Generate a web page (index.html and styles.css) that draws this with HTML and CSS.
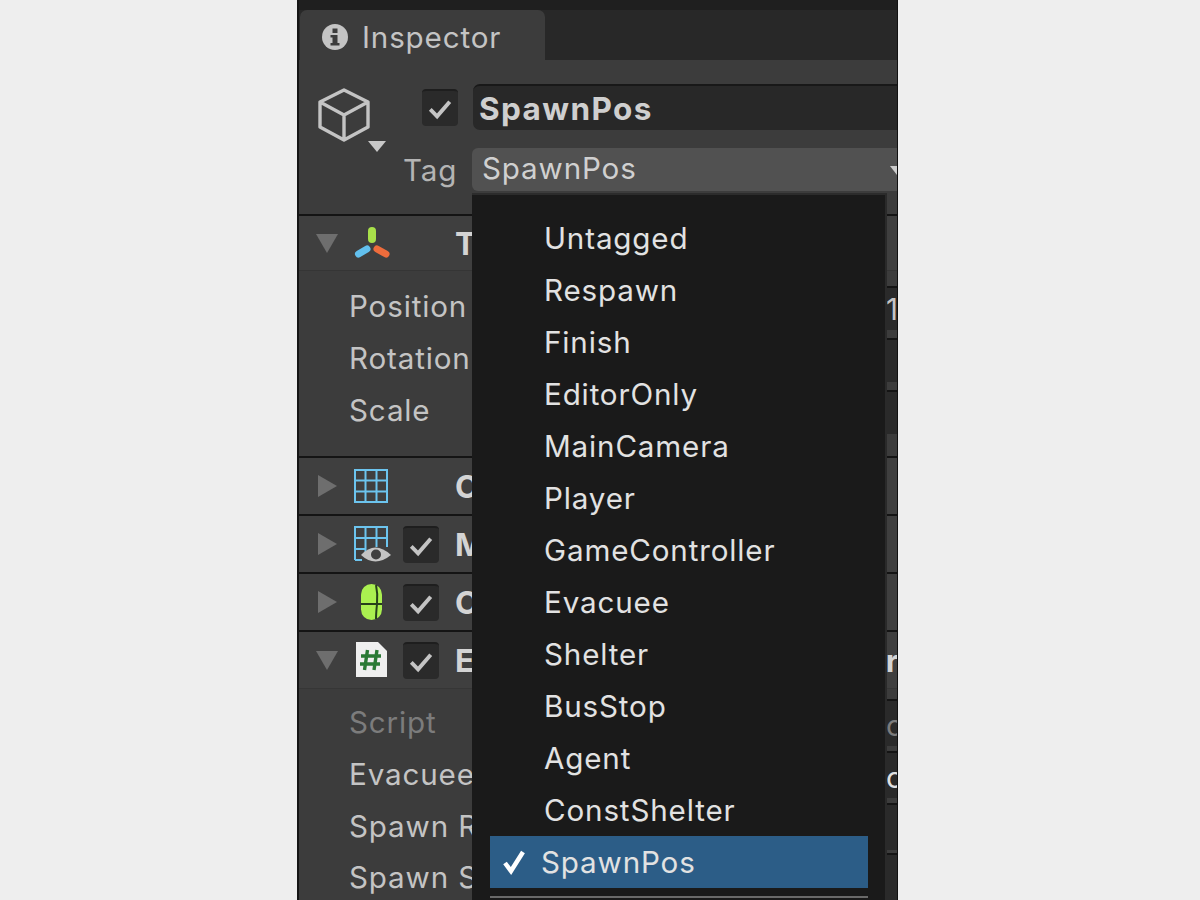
FILE: index.html
```html
<!DOCTYPE html>
<html lang="en">
<head>
<meta charset="utf-8">
<title>Inspector</title>
<link rel="stylesheet" href="styles.css">
</head>
<body>
<main class="panel">
  <div class="tabbar">
    <div class="tab">
      <svg class="tab-icon" viewBox="0 0 26 26"><circle cx="13" cy="13" r="13" fill="#c4c4c4"/><rect x="10.500" y="4.500" width="5" height="4.500" fill="#3c3c3c"/><path d="M8.500 11h7v8h2v2.500h-9V19h2v-5.500h-2z" fill="#3c3c3c"/></svg>
      <span>Inspector</span>
    </div>
  </div>
  <section class="head">
    <div class="head-row">
      <svg class="cube" viewBox="0 0 70 66"><path d="M26 2 50 14V39L26 52 2 39V14ZM2 14 26 27 50 14M26 27V52" fill="none" stroke="#c4c4c4" stroke-width="3.400" stroke-linejoin="round"/><path d="M50 53H68L59 64Z" fill="#c8c8c8"/></svg>
      <span class="check head-check"><svg viewBox="0 0 36 36"><path d="M8 19l7 7L28 11" fill="none" stroke="#c4c4c4" stroke-width="4"/></svg></span>
      <div class="name-field">SpawnPos</div>
    </div>
    <div class="tag-row">
      <span class="tag-label">Tag</span>
      <div class="tag-field">SpawnPos<i class="tag-arrow"></i></div>
    </div>
  </section>

  <section class="comp">
    <header class="comp-head comp-head-short">
      <i class="arrow-down"></i>
      <svg class="icon" viewBox="0 0 38 38"><path d="M20 7v8" stroke="#a8e04a" stroke-width="8" stroke-linecap="round"/><path d="M15 25 6.500 30" stroke="#62c0ee" stroke-width="7" stroke-linecap="round"/><path d="M25 25l9 5" stroke="#ee6c3c" stroke-width="7" stroke-linecap="round"/></svg>
      <span class="no-check"></span>
      <strong class="comp-name">Transform</strong>
    </header>
    <div class="props props-transform">
      <div class="prop"><span>Position</span><b class="val">1</b></div>
      <div class="prop"><span>Rotation</span><b class="val"></b></div>
      <div class="prop"><span>Scale</span><b class="val"></b></div>
    </div>
  </section>

  <section class="comp">
    <header class="comp-head">
      <i class="arrow-right"></i>
      <svg class="icon" viewBox="0 0 38 38"><path d="M3 3H35V35H3ZM13.500 3V35M24.500 3V35M3 13.500H35M3 24.500H35" fill="none" stroke="#6cc4ee" stroke-width="2"/></svg>
      <span class="no-check"></span>
      <strong class="comp-name">Cube (Mesh Filter)</strong>
    </header>
  </section>

  <section class="comp">
    <header class="comp-head">
      <i class="arrow-right"></i>
      <svg class="icon" viewBox="0 0 38 38"><path d="M3 35V2H35V22M13.500 2V28M24.500 2V22M3 13H35M3 24H14M3 35H10" fill="none" stroke="#6cc4ee" stroke-width="2"/><path d="M9 30Q23 15 39 30Q23 43 9 30Z" fill="#c4c4c4"/><circle cx="24" cy="29.500" r="5" fill="#3e3e3e"/></svg>
      <span class="check"><svg viewBox="0 0 36 36"><path d="M8 19l7 7L28 11" fill="none" stroke="#c4c4c4" stroke-width="4"/></svg></span>
      <strong class="comp-name">Mesh Renderer</strong>
    </header>
  </section>

  <section class="comp">
    <header class="comp-head">
      <i class="arrow-right"></i>
      <svg class="icon" viewBox="0 0 38 38"><rect x="9" y="1" width="21" height="36" rx="10.500" fill="#aaf050"/><path d="M9 21H30M24 2Q26 11 25 21T24 36" stroke="#26401a" stroke-width="2" fill="none"/></svg>
      <span class="check"><svg viewBox="0 0 36 36"><path d="M8 19l7 7L28 11" fill="none" stroke="#c4c4c4" stroke-width="4"/></svg></span>
      <strong class="comp-name">Capsule Collider</strong>
    </header>
  </section>

  <section class="comp comp-last">
    <header class="comp-head">
      <i class="arrow-down"></i>
      <svg class="icon" viewBox="0 0 38 38"><path d="M4 1H26L35 10V36H4Z" fill="#efefef"/><path d="M15.500 9 12.500 29M25 9 22 29M9 15H29M8 23H28" stroke="#2a7a35" stroke-width="3.400" fill="none"/></svg>
      <span class="check"><svg viewBox="0 0 36 36"><path d="M8 19l7 7L28 11" fill="none" stroke="#c4c4c4" stroke-width="4"/></svg></span>
      <strong class="comp-name comp-name-wide">Evacuee Spawn Controller (Script)</strong>
    </header>
    <div class="props props-script">
      <div class="prop prop-dim"><span>Script</span><b class="val">c</b></div>
      <div class="prop"><span>Evacuee</span><b class="val val-bright">o</b></div>
      <div class="prop"><span>Spawn Rate</span><b class="val"></b></div>
      <div class="prop prop-end"><span>Spawn Size</span><b class="val"></b></div>
    </div>
  </section>

  <ul class="menu">
    <li>Untagged</li>
    <li>Respawn</li>
    <li>Finish</li>
    <li>EditorOnly</li>
    <li>MainCamera</li>
    <li>Player</li>
    <li>GameController</li>
    <li>Evacuee</li>
    <li>Shelter</li>
    <li>BusStop</li>
    <li>Agent</li>
    <li>ConstShelter</li>
    <li class="selected"><svg class="tick" viewBox="0 0 24 26"><path d="M3 14l6 8L21 3" fill="none" stroke="#fff" stroke-width="4.500"/></svg>SpawnPos</li>
    <li class="separator"></li>
  </ul>
</main>
</body>
</html>
```
FILE: styles.css
```css
* { box-sizing: border-box; }
html, body { margin: 0; height: 100%; }
body {
  background: #eeeeee;
  overflow: hidden;
  font-family: Inter, "Liberation Sans", sans-serif;
  font-size: 29.600px;
  color: #c4c4c4;
}
.panel {
  position: relative;
  width: 601px;
  height: 900px;
  margin-left: 297px;
  background: #3c3c3c;
  border-left: 2px solid #151515;
  border-right: 1px solid #111;
  overflow: hidden;
  letter-spacing: 0.85px;
}
.tabbar {
  height: 60px;
  background: #282828;
  border-top: 10px solid #1f1f1f;
  padding-left: 1px;
}
.tab {
  width: 245px;
  height: 50px;
  display: flex;
  align-items: center;
  gap: 14px;
  padding: 4px 0 0 22px;
  background: #3c3c3c;
  border-radius: 7px 7px 0 0;
}
.tab-icon { width: 26px; height: 26px; flex: none; }
.head { padding-top: 24px; border-bottom: 2px solid #141414; height: 156px; }
.head-row { display: flex; height: 46px; padding-left: 19px; }
.cube { width: 70px; height: 66px; flex: none; margin-top: 4px; overflow: visible; }
.head-check { margin: 5px 15px 0 34px; }
.check {
  width: 36px;
  height: 37px;
  flex: none;
  border-radius: 4px;
  background: #2a2a2a;
  border-top: 2px solid #1e1e1e;
}
.check svg { display: block; width: 100%; height: 100%; }
.name-field {
  flex: 1;
  background: #282828;
  border-radius: 7px 0 0 7px;
  border-top: 2px solid #181818;
  padding-left: 6px;
  font-size: 31.500px;
  letter-spacing: 1.4px;
  font-weight: 700;
  color: #cfcfcf;
  line-height: 46px;
  white-space: nowrap;
}
.tag-row { display: flex; align-items: center; margin-top: 18px; padding-left: 104px; height: 43px; }
.tag-label { width: 69px; color: #b4b4b4; }
.tag-field {
  position: relative;
  flex: 1;
  height: 43px;
  line-height: 41px;
  padding-left: 10px;
  background: #515151;
  border-radius: 6px 0 0 6px;
  color: #d0d0d0;
}
.tag-arrow {
  position: absolute;
  right: -7px;
  top: 18px;
  border: 7px solid transparent;
  border-top: 9px solid #ccc;
  border-bottom: 0;
}
.comp { border-bottom: 2px solid #141414; }
.comp-last { border-bottom: 0; }
.comp-head {
  display: flex;
  align-items: center;
  height: 56px;
  padding-left: 17px;
  background: #3f3f3f;
}
.comp-head-short { height: 54px; }
.arrow-down, .arrow-right { display: block; flex: none; width: 36px; }
.arrow-down::before, .arrow-right::before { content: ""; display: block; width: 0; height: 0; }
.arrow-down::before {
  border-left: 11px solid transparent;
  border-right: 11px solid transparent;
  border-top: 19px solid #6e6e6e;
}
.arrow-right::before {
  margin-left: 2px;
  border-top: 11px solid transparent;
  border-bottom: 11px solid transparent;
  border-left: 19px solid #6e6e6e;
}
.icon { width: 38px; height: 38px; flex: none; margin-right: 13px; overflow: visible; }
.no-check { width: 36px; flex: none; }
.comp-name { margin-left: 16px; white-space: nowrap; font-weight: 700; color: #d4d4d4; font-size: 31.500px; letter-spacing: 1.4px; }
.comp-name-wide { word-spacing: 2.700px; }
.props { display: flex; flex-direction: column; }
.props-transform { padding: 9px 0 20px; border-top: 1px solid #353535; }
.props-script { padding-top: 7px; border-top: 1px solid #363636; }
.prop {
  display: flex;
  align-items: center;
  justify-content: space-between;
  height: 52px;
  padding-left: 50px;
}
.prop-end { height: 49px; }
.prop-dim { color: #7c7c7c; }
.val {
  width: 11px;
  height: 44px;
  margin-top: 4px;
  overflow: hidden;
  background: #2a2a2a;
  border-top: 2px solid #141414;
  font-weight: 400;
  line-height: 42px;
  color: inherit;
}
.props-script .val { height: 47px; margin-top: 0; line-height: 48px; }
.val-bright { color: #e0e0e0; }
.menu {
  position: absolute;
  left: 173px;
  top: 193px;
  width: 415px;
  height: 707px;
  margin: 0;
  padding: 17px 0 0;
  list-style: none;
  background: #1a1a1a;
  border-top: 2px solid #2c2c2c;
  border-right: 2px solid #2a2a2a;
  color: #e2e2e2;
}
.menu li { height: 52px; line-height: 52px; padding-left: 72px; white-space: nowrap; }
.menu .selected {
  display: flex;
  align-items: center;
  margin: 0 17px 0 18px;
  padding-left: 12px;
  background: #2c5d87;
  gap: 15px;
}
.tick { width: 24px; height: 26px; flex: none; }
.menu .separator { height: 2px; margin: 8px 17px 0 18px; padding: 0; background: #6a6a6a; }
```
